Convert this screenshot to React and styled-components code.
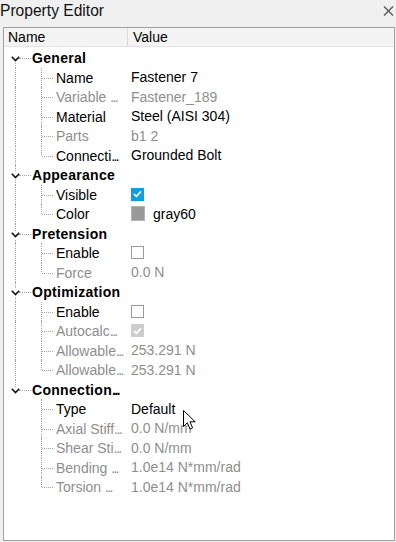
import React from 'react';
import styled, { createGlobalStyle } from 'styled-components';

const GlobalStyle = createGlobalStyle`
  html, body {
    margin: 0;
    padding: 0;
    background: #f0f0f0;
  }
  body {
    font-family: "Liberation Sans", Arial, sans-serif;
  }
`;

const Window = styled.div`
  width: 396px;
  height: 542px;
  background: #f0f0f0;
  display: flex;
  flex-direction: column;
  position: relative;
  overflow: hidden;
`;

const TitleBar = styled.div`
  height: 27px;
  display: flex;
  align-items: flex-start;
  justify-content: space-between;
  h1 {
    margin: 0;
    font-size: 15.6px;
    font-weight: 400;
    line-height: 22px;
    color: #111;
  }
`;

const CloseBtn = styled.button`
  border: 0;
  background: none;
  padding: 0;
  margin: 5px 2px 0 0;
  width: 12px;
  height: 12px;
  display: flex;
  align-items: center;
  justify-content: center;
`;

const Panel = styled.div`
  flex: 1;
  margin: 0 1px 1px 3px;
  border: 1px solid #a0a0a0;
  background: #fff;
  display: flex;
  flex-direction: column;
`;

const HeaderRow = styled.div`
  display: flex;
  height: 18px;
  background: #f4f4f4;
  border-bottom: 1px solid #e3e3e3;
  font-size: 14px;
  line-height: 19px;
  color: #000;
`;

const HeaderCell = styled.div`
  box-sizing: border-box;
  width: ${(p) => (p.$w ? `${p.$w}px` : 'auto')};
  flex: ${(p) => (p.$w ? 'none' : 1)};
  padding-left: ${(p) => p.$pad}px;
  border-right: ${(p) => (p.$w ? '1px solid #dadada' : 'none')};
`;

const Tree = styled.div`
  display: flex;
  flex-direction: column;
  padding-top: 1px;
  font-size: 14px;
`;

const Row = styled.div`
  display: flex;
  align-items: stretch;
  height: 19.5px;
  line-height: 20.5px;
`;

const NameCell = styled.div`
  width: 127px;
  flex: none;
  display: flex;
  align-items: stretch;
  overflow: hidden;
`;

const Branch = styled.span`
  position: relative;
  flex: 0 0 ${(p) => p.$w}px;
  &::before {
    content: '';
    display: ${(p) => (p.$v === 'none' ? 'none' : 'block')};
    position: absolute;
    left: ${(p) => p.$at}px;
    top: ${(p) => (p.$v === 'bottom' ? '10px' : '0')};
    bottom: ${(p) => (p.$v === 'top' ? '10px' : '0')};
    border-left: 1px dotted #a3a3a3;
  }
  &::after {
    content: '';
    display: ${(p) => (p.$h ? 'block' : 'none')};
    position: absolute;
    left: ${(p) => p.$hFrom}px;
    width: ${(p) => p.$hLen}px;
    top: 10px;
    border-top: 1px dotted #a3a3a3;
  }
`;

const Expander = styled.span`
  position: absolute;
  left: 6px;
  top: 7px;
  width: 11px;
  height: 8px;
  background: #fff;
  display: flex;
  align-items: center;
  justify-content: center;
`;

const Label = styled.span`
  white-space: nowrap;
  color: ${(p) => (p.$disabled ? '#8e8e8e' : '#000')};
  font-weight: ${(p) => (p.$bold ? 700 : 400)};
  letter-spacing: ${(p) => (p.$bold ? '0.3px' : '0')};
`;

const Dots = styled.span`
  letter-spacing: -1.6px;
`;

const ValueCell = styled.div`
  flex: 1;
  display: flex;
  align-items: center;
  gap: 8px;
  white-space: nowrap;
  color: ${(p) => (p.$disabled ? '#8e8e8e' : '#000')};
`;

const Check = styled.span`
  width: 13px;
  height: 13px;
  box-sizing: border-box;
  display: flex;
  align-items: center;
  justify-content: center;
  background: ${(p) => (p.$checked ? (p.$disabled ? '#cdcdcd' : '#0f9de3') : '#fff')};
  border: 1px solid ${(p) => (p.$checked ? (p.$disabled ? '#cdcdcd' : '#0f9de3') : '#9a9a9a')};
`;

const Swatch = styled.span`
  width: 14px;
  height: 15px;
  box-sizing: border-box;
  background: #999999;
  border: 1px solid #b4b4b4;
`;

const Cursor = styled.svg`
  position: absolute;
  left: 183px;
  top: 410px;
`;

const groups = [
  {
    title: 'General',
    items: [
      { name: 'Name', value: 'Fastener 7' },
      { name: 'Variable ', cut: true, value: 'Fastener_189', disabled: true },
      { name: 'Material', value: 'Steel (AISI 304)' },
      { name: 'Parts', value: 'b1 2', disabled: true },
      { name: 'Connecti', cut: true, value: 'Grounded Bolt' },
    ],
  },
  {
    title: 'Appearance',
    items: [
      { name: 'Visible', check: true, checked: true },
      { name: 'Color', swatch: true, value: 'gray60' },
    ],
  },
  {
    title: 'Pretension',
    items: [
      { name: 'Enable', check: true },
      { name: 'Force', value: '0.0 N', disabled: true },
    ],
  },
  {
    title: 'Optimization',
    items: [
      { name: 'Enable', check: true },
      { name: 'Autocalc', cut: true, check: true, checked: true, disabled: true },
      { name: 'Allowable', cut: true, value: '253.291 N', disabled: true },
      { name: 'Allowable', cut: true, value: '253.291 N', disabled: true },
    ],
  },
  {
    title: 'Connection',
    cut: true,
    items: [
      { name: 'Type', value: 'Default' },
      { name: 'Axial Stiff', cut: true, value: '0.0 N/mm', disabled: true },
      { name: 'Shear Sti', cut: true, value: '0.0 N/mm', disabled: true },
      { name: 'Bending ', cut: true, value: '1.0e14 N*mm/rad', disabled: true },
      { name: 'Torsion ', cut: true, value: '1.0e14 N*mm/rad', disabled: true },
    ],
  },
];

function Chevron() {
  return (
    <svg width="9" height="6" viewBox="0 0 9 6">
      <path d="M0.8 0.8 L4.5 4.6 L8.2 0.8" fill="none" stroke="#111" strokeWidth="1.6" />
    </svg>
  );
}

function Tick({ color = '#fff' }) {
  return (
    <svg width="9" height="8" viewBox="0 0 9 8">
      <path d="M1 4.2 L3.4 6.4 L8 1.4" fill="none" stroke={color} strokeWidth="1.6" />
    </svg>
  );
}

function Value({ item }) {
  if (item.check) {
    return (
      <ValueCell>
        <Check $checked={item.checked} $disabled={item.disabled}>
          {item.checked && <Tick />}
        </Check>
      </ValueCell>
    );
  }
  return (
    <ValueCell $disabled={item.disabled}>
      {item.swatch && <Swatch />}
      {item.value}
    </ValueCell>
  );
}

function Group({ group, first, last }) {
  const outer = last ? 'none' : 'full';
  return (
    <>
      <Row>
        <NameCell>
          <Branch $w={28} $at={11} $v={first ? 'bottom' : last ? 'top' : 'full'} $h $hFrom={15} $hLen={12}>
            <Expander>
              <Chevron />
            </Expander>
          </Branch>
          <Label $bold>
            {group.title}
            {group.cut && <Dots>...</Dots>}
          </Label>
        </NameCell>
      </Row>
      {group.items.map((item, i) => (
        <Row key={i}>
          <NameCell>
            <Branch $w={26} $at={11} $v={outer} />
            <Branch
              $w={26}
              $at={11}
              $v={i === group.items.length - 1 ? 'top' : 'full'}
              $h
              $hFrom={12}
              $hLen={11}
            />
            <Label $disabled={item.disabled}>
              {item.name}
              {item.cut && <Dots>...</Dots>}
            </Label>
          </NameCell>
          <Value item={item} />
        </Row>
      ))}
    </>
  );
}

export default function App() {
  return (
    <Window>
      <GlobalStyle />
      <TitleBar>
        <h1>Property Editor</h1>
        <CloseBtn aria-label="close">
          <svg width="11" height="10" viewBox="0 0 11 10">
            <path d="M1 0.5 L10 9.5 M10 0.5 L1 9.5" stroke="#555" strokeWidth="1.3" />
          </svg>
        </CloseBtn>
      </TitleBar>
      <Panel>
        <HeaderRow>
          <HeaderCell $w={124} $pad={4}>Name</HeaderCell>
          <HeaderCell $pad={5}>Value</HeaderCell>
        </HeaderRow>
        <Tree>
          {groups.map((g, i) => (
            <Group key={g.title} group={g} first={i === 0} last={i === groups.length - 1} />
          ))}
        </Tree>
      </Panel>
      <Cursor width="14" height="21" viewBox="0 0 14 21">
        <path
          d="M0.5 0.5 L0.5 16.5 L4.3 12.8 L7 19 L9.6 17.9 L7 11.8 L12.2 11.8 Z"
          fill="#fff"
          stroke="#000"
          strokeWidth="1"
          strokeLinejoin="round"
        />
      </Cursor>
    </Window>
  );
}
